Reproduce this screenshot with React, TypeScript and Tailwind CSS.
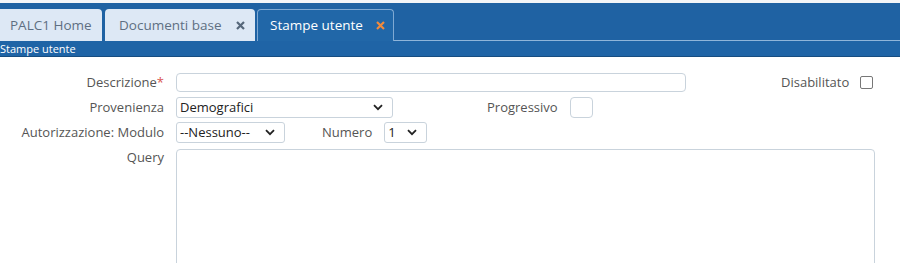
import React from 'react';

// Small chevron used by the native-looking selects
function Chevron() {
  return (
    <svg width="10" height="7" viewBox="0 0 10 7" className="shrink-0">
      <path d="M1 1.2l4 4 4-4" fill="none" stroke="#222" strokeWidth="1.8" />
    </svg>
  );
}

function CloseX({ color }: { color: string }) {
  return (
    <svg width="9" height="9" viewBox="0 0 9 9" className="shrink-0">
      <path d="M1 1l7 7M8 1l-7 7" fill="none" stroke={color} strokeWidth="2.2" />
    </svg>
  );
}

function Select({ value, width }: { value: string; width: string }) {
  return (
    <div
      className={`${width} h-[21px] flex items-center justify-between pl-[3px] pr-[9px] border border-[#c9d3dc] rounded-[3px] bg-white text-[13px] text-[#222]`}
    >
      <span>{value}</span>
      <Chevron />
    </div>
  );
}

const labelCls = 'w-[166px] shrink-0 text-right pr-[2px] text-[13px] text-[#555]';

export default function App() {
  return (
    <div className="w-[900px] h-[263px] overflow-hidden bg-white font-['Open_Sans',sans-serif]">
      {/* Tab bar */}
      <div className="h-[3px] bg-[#f3f5f8]" />
      <div className="h-[38px] bg-[#1f62a3] flex items-end">
        <div className="h-[32px] w-[102px] bg-[#dde8f5] rounded-tr-[4px] flex items-center pl-[10px] text-[13.5px] text-[#5e6f82]">
          PALC1 Home
        </div>
        <div className="ml-[3px] h-[32px] w-[150px] bg-[#dde8f5] rounded-t-[4px] flex items-center pl-[14px] text-[13.5px] text-[#5e6f82]">
          <span>Documenti base</span>
          <span className="ml-[14px]">
            <CloseX color="#56677a" />
          </span>
        </div>
        <div className="ml-[2px] h-[32px] w-[137px] bg-[#2167a8] border border-b-0 border-[#7fa9d3] rounded-t-[4px] flex items-center pl-[12px] text-[13.5px] text-white">
          <span>Stampe utente</span>
          <span className="ml-[13px]">
            <CloseX color="#f08a3c" />
          </span>
        </div>
        <div className="flex-1 h-[1px] bg-[#8fb5da]" />
      </div>
      <div className="h-[16px] bg-[#1f64a6] border-b border-[#174d80] flex items-center text-[11px] text-white leading-none">
        Stampe utente
      </div>

      {/* Form */}
      <div className="pt-[15px] flex flex-col gap-[4px]">
        <div className="flex items-center h-[21px]">
          <div className={labelCls}>
            Descrizione<span className="text-[#d9534f]">*</span>
          </div>
          <div className="ml-[10px] w-[510px] h-[19px] border border-[#c9d3dc] rounded-[4px]" />
          <div className="ml-[95px] text-[13px] text-[#555]">Disabilitato</div>
          <div className="ml-[11px] w-[13px] h-[13px] border border-[#777] rounded-[2px]" />
        </div>

        <div className="flex items-center h-[21px]">
          <div className={labelCls}>Provenienza</div>
          <div className="ml-[10px]">
            <Select value="Demografici" width="w-[217px]" />
          </div>
          <div className="ml-[94px] text-[13px] text-[#555]">Progressivo</div>
          <div className="ml-[12px] w-[23px] h-[21px] border border-[#c9d3dc] rounded-[4px]" />
        </div>

        <div className="flex items-center h-[21px]">
          <div className={labelCls}>Autorizzazione: Modulo</div>
          <div className="ml-[10px]">
            <Select value="--Nessuno--" width="w-[109px]" />
          </div>
          <div className="ml-[37px] text-[13px] text-[#555]">Numero</div>
          <div className="ml-[12px]">
            <Select value="1" width="w-[43px]" />
          </div>
        </div>

        <div className="flex items-start mt-[2px]">
          <div className={`${labelCls} -mt-[1px]`}>Query</div>
          <div className="ml-[10px] w-[699px] h-[130px] border border-[#c9d3dc] rounded-[4px]" />
        </div>
      </div>
    </div>
  );
}
